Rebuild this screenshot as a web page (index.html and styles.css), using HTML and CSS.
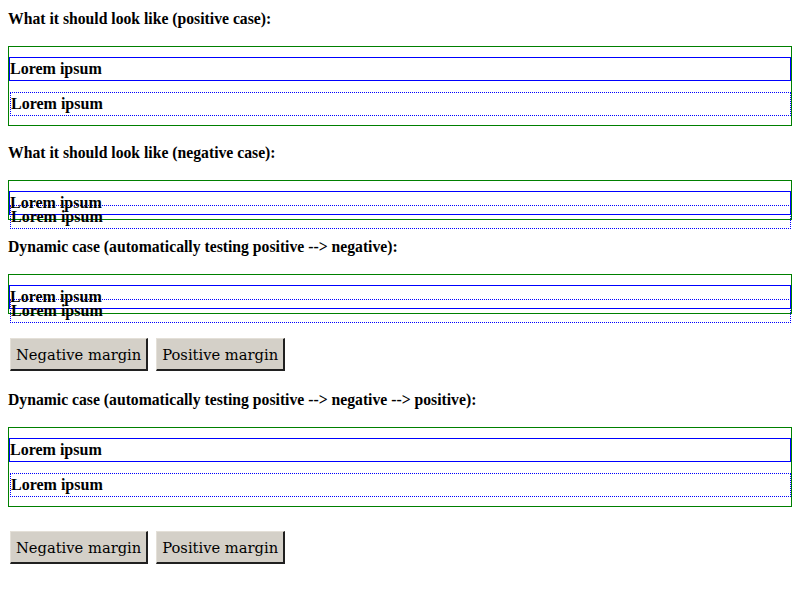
FILE: index.html
```html
<!DOCTYPE html>
<html>
<head>
<meta charset="utf-8">
<link rel="stylesheet" href="styles.css">
</head>
<body>
<p class="heading first">What it should look like (positive case):</p>
<div class="box">
  <div class="solid">Lorem ipsum</div>
  <div class="dotted pos">Lorem ipsum</div>
</div>
<p class="heading">What it should look like (negative case):</p>
<div class="box">
  <div class="solid">Lorem ipsum</div>
  <div class="dotted neg">Lorem ipsum</div>
</div>
<p class="heading">Dynamic case (automatically testing positive --&gt; negative):</p>
<div class="box">
  <div class="solid">Lorem ipsum</div>
  <div class="dotted neg">Lorem ipsum</div>
</div>
<div class="buttons">
  <button class="btn">Negative margin</button>
  <button class="btn">Positive margin</button>
</div>
<p class="heading">Dynamic case (automatically testing positive --&gt; negative --&gt; positive):</p>
<div class="box">
  <div class="solid">Lorem ipsum</div>
  <div class="dotted pos">Lorem ipsum</div>
</div>
<div class="buttons">
  <button class="btn">Negative margin</button>
  <button class="btn">Positive margin</button>
</div>
</body>
</html>
```
FILE: styles.css
```css
html { background: #fff; }
body {
  margin: 0;
  padding: 10px 8px;
  font-family: "Liberation Serif", serif;
  font-weight: bold;
  font-size: 16px;
  color: #000;
}
.heading {
  margin: 18px 0;
  line-height: 18px;
  font-size: 15.7px;
}
.heading.first { margin-top: 0; }
.box {
  border: 1px solid #008000;
  display: flow-root;
}
.solid {
  border: 1px solid #0000ff;
  margin-top: 10px;
  line-height: 22px;
  height: 22px;
}
.dotted {
  border: 1px dotted #0000ff;
  line-height: 22px;
  height: 22px;
  margin-left: 1px;
}
.dotted.pos { margin-top: 11px; margin-bottom: 9px; }
.dotted.neg { margin-top: -10px; margin-bottom: -10px; }
.buttons {
  display: flex;
  gap: 8px;
  margin: 24px 0 20px 2px;
}
.btn {
  font-family: "DejaVu Serif", serif;
  font-weight: normal;
  font-size: 14.7px;
  color: #000;
  background: #d4d0c8;
  height: 33px;
  padding: 0 5px 0 5px;
  border-style: solid;
  border-width: 1px 2px 2px 1px;
  border-color: #e4e0d8 #202020 #202020 #e4e0d8;
  border-radius: 0;
  margin: 0;
}
```
